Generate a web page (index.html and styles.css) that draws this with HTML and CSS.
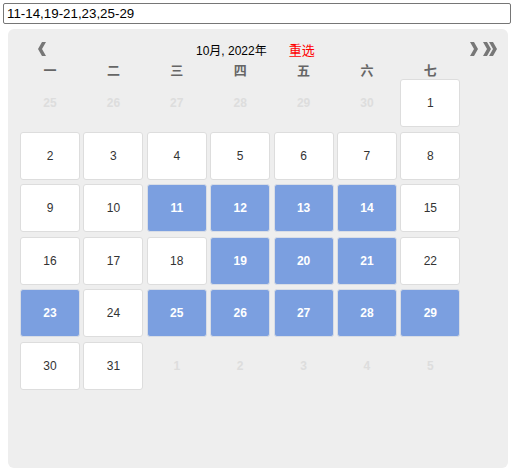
FILE: index.html
```html
<!DOCTYPE html>
<html>
	<head>
		<meta charset="utf-8">
		<link rel="stylesheet" href="styles.css">
	</head>
	<body>
		<div class="page">
			<input class="range" type="text" value="11-14,19-21,23,25-29">
			<div class="panel">
				<div class="head">
					<svg class="nav prev" width="10" height="14" viewBox="0 0 10 14"><polygon points="9,0 5,7 9,14 5,14 1,7 5,0"/></svg>
					<span class="title">10月, 2022年</span>
					<span class="reset">重选</span>
					<span class="next">
						<svg class="nav" width="10" height="14" viewBox="0 0 10 14"><polygon points="1,0 5,0 9,7 5,14 1,14 5,7"/></svg>
						<svg class="nav" width="16" height="14" viewBox="0 0 16 14"><polygon points="1,0 5,0 9,7 5,14 1,14 5,7"/><polygon points="7,0 11,0 15,7 11,14 7,14 11,7"/></svg>
					</span>
				</div>
				<div class="weekdays">
					<span>一</span><span>二</span><span>三</span><span>四</span><span>五</span><span>六</span><span>七</span>
				</div>
				<div class="days">
					<div class="day other">25</div><div class="day other">26</div><div class="day other">27</div><div class="day other">28</div><div class="day other">29</div><div class="day other">30</div><div class="day">1</div>
					<div class="day">2</div><div class="day">3</div><div class="day">4</div><div class="day">5</div><div class="day">6</div><div class="day">7</div><div class="day">8</div>
					<div class="day">9</div><div class="day">10</div><div class="day sel">11</div><div class="day sel">12</div><div class="day sel">13</div><div class="day sel">14</div><div class="day">15</div>
					<div class="day">16</div><div class="day">17</div><div class="day">18</div><div class="day sel">19</div><div class="day sel">20</div><div class="day sel">21</div><div class="day">22</div>
					<div class="day sel">23</div><div class="day">24</div><div class="day sel">25</div><div class="day sel">26</div><div class="day sel">27</div><div class="day sel">28</div><div class="day sel">29</div>
					<div class="day">30</div><div class="day">31</div><div class="day other">1</div><div class="day other">2</div><div class="day other">3</div><div class="day other">4</div><div class="day other">5</div>
				</div>
			</div>
		</div>
	</body>
</html>
```

FILE: styles.css
```css
body
{
	margin: 0;
	font-family: "Liberation Sans", "Noto Sans CJK SC", sans-serif;
	color: #333;
}
.page
{
	padding: 3px;
}
.range
{
	display: block;
	box-sizing: border-box;
	width: 508px;
	height: 21px;
	margin: 0;
	padding: 1px 3px;
	border: 1px solid #767676;
	border-radius: 2px;
	font-family: "Liberation Sans", sans-serif;
	font-size: 13.33px;
	color: #000;
}
.panel
{
	box-sizing: border-box;
	width: 500px;
	height: 439px;
	margin: 5px 0 0 5px;
	padding: 10px 0 0 12px;
	background-color: #eee;
	border-radius: 6px;
}
.head
{
	display: flex;
	align-items: center;
	height: 20px;
	margin-right: 10px;
}
.nav
{
	fill: #777;
	display: block;
}
.prev
{
	margin-left: 17px;
}
.title
{
	margin-left: 149px;
	font-size: 12px;
	color: #000;
}
.reset
{
	margin-left: 22px;
	font-size: 13px;
	color: #f00;
}
.next
{
	display: flex;
	gap: 3px;
	margin-left: auto;
}
.weekdays
{
	display: grid;
	grid-template-columns: repeat(7, 60px);
	column-gap: 3.4px;
	height: 20px;
	align-items: center;
	font-size: 13px;
	font-weight: bold;
	color: #666;
	text-align: center;
}
.days
{
	display: grid;
	grid-template-columns: repeat(7, 60px);
	grid-auto-rows: 48px;
	column-gap: 3.4px;
	row-gap: 4.6px;
}
.day
{
	box-sizing: border-box;
	display: flex;
	align-items: center;
	justify-content: center;
	background-color: #fff;
	border: 1px solid #ddd;
	border-radius: 3px;
	font-size: 12px;
}
.day.other
{
	background: none;
	border-color: transparent;
	color: #ddd;
	font-weight: bold;
}
.day.sel
{
	background-color: #7b9fe0;
	border-color: #d8dde6;
	color: #fff;
	font-weight: bold;
}
```
